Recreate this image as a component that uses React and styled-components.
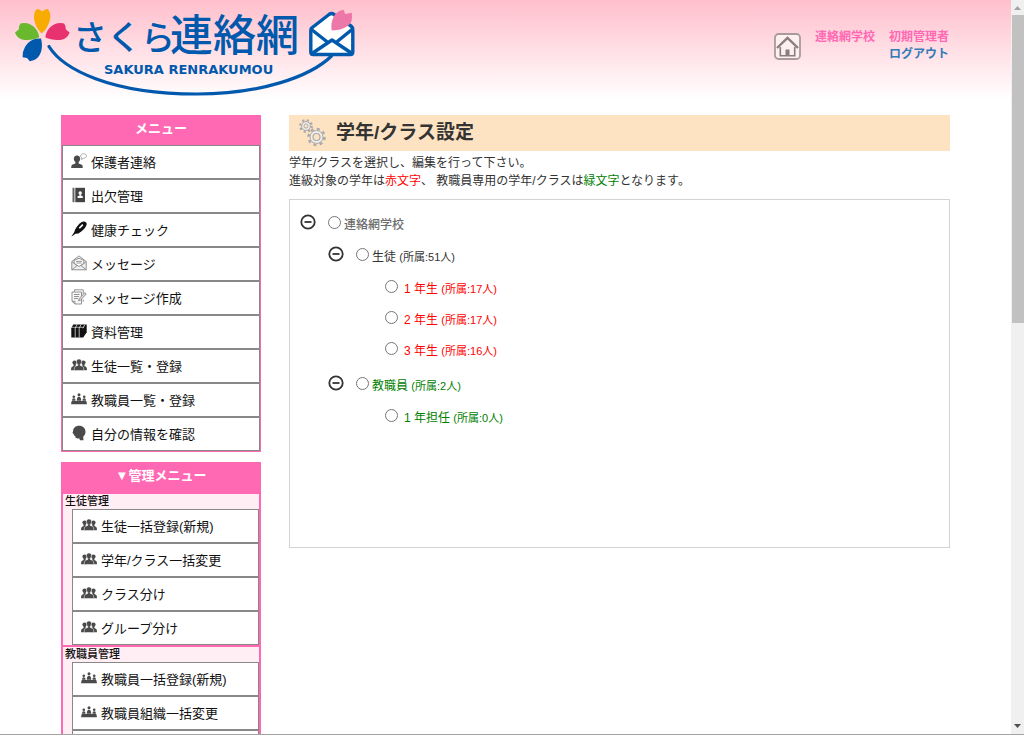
import { useState } from "react";
import styled, { createGlobalStyle } from "styled-components";

const GlobalStyle = createGlobalStyle`
  * {
    box-sizing: border-box;
  }

  body {
    margin: 0;
    background: #fff;
    color: #333;
    font-family: "Liberation Sans", "Noto Sans CJK JP", sans-serif;
    font-size: 12px;
  }

  a {
    color: inherit;
    text-decoration: none;
  }
`;

const Window = styled.div`
  display: grid;
  grid-template-columns: 1fr 13px;
  height: 100vh;
  border-bottom: 1px solid #a3a3a3;
`;

const Page = styled.div`
  overflow-y: auto;
  scrollbar-width: none;
  background: linear-gradient(#ffbfcc, #fff 100px) no-repeat;
`;

const ScrollTrack = styled.div`
  display: flex;
  flex-direction: column;
  align-items: center;
  background: #f0f0f0;
`;

const ScrollArrow = styled.svg`
  width: 13px;
  height: 15px;
  fill: ${(props) => props.$color};
`;

const ScrollThumb = styled.div`
  align-self: stretch;
  flex: 0 0 42%;
  margin: 0 0 auto 1px;
  background: #c1c1c1;
`;

const Header = styled.header`
  display: flex;
  justify-content: space-between;
  height: 115px;
  padding-right: 62px;
`;

const HeaderActions = styled.div`
  display: flex;
  align-items: flex-start;
  gap: 14px;
  padding-top: 29px;
`;

const HomeLink = styled.a`
  padding-top: 4px;

  svg {
    display: block;
  }
`;

const UserInfo = styled.div`
  display: flex;
  flex-direction: column;
  align-items: flex-end;

  line-height: 17px;
  font-weight: 700;
`;

const UserNames = styled.div`
  display: flex;
  gap: 14px;
  color: #ff69b4;
`;

const LogoutLink = styled.a`
  color: #337ab7;
`;

const Columns = styled.div`
  display: flex;
  align-items: flex-start;
  gap: 28px;
  padding: 0 61px;
`;

const Sidebar = styled.nav`
  flex: 0 0 200px;
`;

const Menu = styled.section`
  margin-bottom: 10px;
`;

const MenuTitle = styled.h2`
  margin: 0;
  padding-bottom: 2px;
  background: #ff69b4;
  color: #fff;
  font-size: 13px;
  line-height: 28px;
  font-weight: 700;
  text-align: center;
`;

const MenuList = styled.ul`
  margin: 0;
  padding: 0;
  border: 1px solid #ff69b4;
  border-top: none;
  list-style: none;
`;

const MenuSection = styled.div`
  padding-left: 9px;
  border: 2px solid #ff69b4;
  border-bottom: none;
  background: #ffeef4;

  ${MenuList} {
    border: none;
  }
`;

const SectionTitle = styled.h3`
  margin: 0 0 0 -7px;
  font-size: 11px;
  line-height: 15px;
  font-weight: 500;
  color: #111;
`;

const MenuLink = styled.a`
  display: flex;
  align-items: center;
  gap: 4px;
  height: 34px;
  padding: 0 8px 2px;

  border: 1px solid #888;
  background: #fff;
  color: #111;
  font-size: 13px;

  svg {
    flex: none;
  }
`;

const EmptySlot = styled.li`
  height: 34px;
  border: 1px solid #888;
  background: #fff;
`;

const Main = styled.main`
  flex: 1;
  min-width: 0;
`;

const TitleBar = styled.div`
  display: flex;
  align-items: center;
  gap: 8px;
  height: 36px;
  padding-left: 9px;
  background: #fee3c3;
`;

const Title = styled.h1`
  margin: 0;
  font-size: 19px;
  line-height: 36px;
  font-weight: 700;
`;

const Description = styled.p`
  margin: 3px 0 9px;
  line-height: 18px;
`;

const Mark = styled.span`
  color: ${(props) => props.$color};
`;

const TreePanel = styled.div`
  min-height: 349px;
  padding: 6px 10px;
  border: 1px solid #d3d3d3;
`;

const Branch = styled.ul`
  margin: 0;
  padding: 0 0 0 28px;
  list-style: none;
`;

const Group = styled.li`
  margin-bottom: 3px;
`;

const Leaves = styled.ul`
  margin: 0;
  padding: 1px 0 0 57px;
  list-style: none;
`;

const Row = styled.div`
  display: flex;
  align-items: center;
  height: ${(props) => (props.$leaf ? "31px" : "32px")};

  input {
    width: 13px;
    height: 13px;
    margin: 0;
  }
`;

const ToggleButton = styled.button`
  width: 16px;
  height: 16px;
  margin-right: 12px;
  padding: 0;
  border: none;
  background: transparent;
  cursor: pointer;

  svg {
    display: block;
  }
`;

const NodeLabel = styled.label`
  padding: 2px 0 0 ${(props) => (props.$leaf ? "6px" : "3px")};
  color: ${(props) => props.$color};
  font-weight: ${(props) => (props.$root ? 500 : 400)};
`;

const Count = styled.span`
  font-size: 11px;
`;

const DARK = "#4a4a4a";

const icons = {
  parent: (
    <>
      <path d="M6 2.400c2.200 0 3.300 1.500 3.200 3.600C9 8.200 7.600 9.500 6 9.500S3 8.200 2.800 6C2.700 3.900 3.800 2.400 6 2.400z" fill={DARK} />
      <path d="M4.400 8.500h3.200v2l3.300 1.200q.9.500.9 3.300H.2q0-2.800.9-3.300l3.300-1.200z" fill={DARK} />
      <path
        d="M12.500.8c1.800 0 3 .9 3 2.200s-1.200 2.300-3 2.300l-2 1.200.3-1.700C10 4.400 9.600 3.800 9.600 3c0-1.300 1.200-2.200 2.900-2.200z"
        fill="#fff"
        stroke="#999"
        strokeWidth=".8"
      />
    </>
  ),
  book: (
    <>
      <path d="M1.500.8h2v14.400h-2z" fill="#666" />
      <path d="M4.300.8h9.700v14.400H4.300z" fill="#444" />
      <circle cx="9.200" cy="6" r="1.700" fill="#fff" />
      <path d="M8.600 7h1.200v1.500l2 .8v1.700H6.600V9.300l2-.8z" fill="#fff" />
    </>
  ),
  thermometer: (
    <>
      <path
        d="M.3 15.700l3-4.700C4.600 6.600 8 2.700 10.800 1.100c2.300-1.300 4.900-.3 4.900 2 0 2.700-4.400 7.500-8.300 9.300l-2.900.3z"
        fill="#111"
      />
      <path d="M8.300 7.300l3.500-3.700" stroke="#fff" strokeWidth="1.600" />
    </>
  ),
  mail: (
    <g fill="none" stroke="#888" strokeWidth=".9" strokeLinejoin="round">
      <path d="M.8 6.500L8 .9l7.200 5.600v8.300H.8z" fill="#eee" />
      <path d="M.8 6.500l4.800 4M15.200 6.500l-4.800 4M.8 14.800L8 9l7.200 5.800" />
      <path d="M3.200 8.300V5.200L8 3.300l4.800 1.900v3.100L8 11.500z" fill="#fff" />
      <path d="M5 6.300h6M5.500 8h5" />
    </g>
  ),
  compose: (
    <g fill="none" stroke="#888" strokeWidth=".9">
      <path d="M3.500 2.800V.8h8.700v4M12.200 10.500v2.300" />
      <path d="M1 3h9.500v12H4L1 12.300z" fill="#f6f6f6" />
      <path d="M3 5.500h5.500M3 7.500h5M3 9.500h4M1 12.300h3V15" />
      <path d="M7.500 11.800l.6-2L13.700 3.600l1.600 1.300-5.700 6.200z" fill="#ddd" />
    </g>
  ),
  binders: (
    <>
      <path d="M.3 5.300L2.200 1.500h13.500v7.700L12.200 14.500H.3z" fill="#111" />
      <path d="M4.200 14.500V5.300l1.900-3.800M8.200 14.500V5.300l1.900-3.800M12 5.300l1.900-3.800" stroke="#fff" strokeWidth=".7" fill="none" />
      <path d="M.8 4.300h11.700" stroke="#fff" strokeWidth=".6" />
    </>
  ),
  group: (
    <g fill={DARK}>
      <circle cx="3.600" cy="5.600" r="2.200" />
      <path d="M2.600 7h2v1.800l1.400.8v3.600H0q0-2.800.8-3.200l1.800-.9z" />
      <circle cx="12.400" cy="5.600" r="2.200" />
      <path d="M13.400 7h-2v1.800l-1.400.8v3.600h6q0-2.800-.8-3.200l-1.800-.9z" />
      <path
        d="M8 2c1.700 0 2.500 1.100 2.500 2.600 0 1.300-.5 2.200-1.300 2.800v1l2.700 1.200q.9.400.9 3.900H3.200q0-3.500.9-3.900l2.700-1.200v-1C6 6.800 5.500 5.900 5.500 4.600 5.500 3.100 6.300 2 8 2z"
        stroke="#fff"
        strokeWidth=".5"
      />
    </g>
  ),
  staff: (
    <g fill={DARK}>
      <circle cx="2.800" cy="5.800" r="1.300" />
      <circle cx="8" cy="3.800" r="1.500" />
      <circle cx="13.200" cy="5.800" r="1.300" />
      <path d="M1 9.700q0-2.400 1.800-2.400t1.800 2.400zM5.800 9.700q0-4 2.200-4t2.200 4zM11.400 9.700q0-2.400 1.800-2.400T15 9.700z" />
      <path d="M.7 10h14.600l.7 3.300H0z" />
    </g>
  ),
  face: (
    <path
      d="M8 .8c4 0 6.500 2.600 6.500 6 0 2.600-1.200 4-2.300 4.900l.3 3.500H9l-.8-2c-1.500.5-3.200.3-3.700-.6l-.3-1.500-1.300-.8-.2-1.300L1.500 8l.6-2C2.300 3 4.500.8 8 .8z"
      fill={DARK}
    />
  ),
};

const mainMenu = [
  { icon: "parent", label: "保護者連絡" },
  { icon: "book", label: "出欠管理" },
  { icon: "thermometer", label: "健康チェック" },
  { icon: "mail", label: "メッセージ" },
  { icon: "compose", label: "メッセージ作成" },
  { icon: "binders", label: "資料管理" },
  { icon: "group", label: "生徒一覧・登録" },
  { icon: "staff", label: "教職員一覧・登録" },
  { icon: "face", label: "自分の情報を確認" },
];

const adminMenu = [
  {
    title: "生徒管理",
    items: [
      { icon: "group", label: "生徒一括登録(新規)" },
      { icon: "group", label: "学年/クラス一括変更" },
      { icon: "group", label: "クラス分け" },
      { icon: "group", label: "グループ分け" },
    ],
  },
  {
    title: "教職員管理",
    items: [
      { icon: "staff", label: "教職員一括登録(新規)" },
      { icon: "staff", label: "教職員組織一括変更" },
    ],
    spare: true,
  },
];

const groups = [
  {
    id: "students",
    name: "生徒",
    count: 51,
    color: "#333",
    children: [
      { id: "grade1", name: "1 年生", count: 17, color: "#f00" },
      { id: "grade2", name: "2 年生", count: 17, color: "#f00" },
      { id: "grade3", name: "3 年生", count: 16, color: "#f00" },
    ],
  },
  {
    id: "teachers",
    name: "教職員",
    count: 2,
    color: "#008000",
    children: [{ id: "homeroom1", name: "1 年担任", count: 0, color: "#008000" }],
  },
];

function Logo() {
  return (
    <svg width="370" height="110" viewBox="0 0 370 110">
      <path
        d="M41.700 33.500C36 28 33 20 34.300 14Q35 10 37 9q3.200 0 5.300 2.600Q45 8.600 48 9.200q2.500 2.800 2.300 7.800C49.800 24 46 30 41.700 33.500z"
        fill="#f8ab00"
      />
      <path
        d="M39.300 37.300C38 30 34 25 27 23.300q-4-.8-6.500.2-2 2.500-1.800 6L15 32.500q2 5.500 7 7c6 1.200 12 .5 17.300-2.200z"
        fill="#6ab82d"
      />
      <path
        d="M45.300 37.300C46.600 30 50.600 25 57.600 23.300q4-.8 6.500.2 2 2.500 1.800 6l3.700 3q-2 5.500-7 7c-6 1.200-12 .5-17.300-2.200z"
        fill="#e8316f"
      />
      <path
        d="M41 38.500c-7-.5-13 3-16 8.500q-2.500 4-2.400 10.200l4.400.8 2.800 3.200q6.200-1 9.200-5.200c3.500-5 3.500-12 2-17.500z"
        fill="#0059ad"
      />
      <path
        d="M49 46.500C63 69 110 94 197 94c63 0 113-17 134.500-38"
        fill="none"
        stroke="#0059ad"
        strokeWidth="3.200"
        strokeLinecap="round"
      />
      <g fill="#0059ad" fontFamily="'Noto Sans CJK JP', sans-serif" fontWeight="500">
        <text x="73" y="50" fontSize="34">
          さくら
        </text>
        <text x="170" y="51" fontSize="43">
          連絡網
        </text>
      </g>
      <text x="104" y="74" fill="#0059ad" fontFamily="'DejaVu Sans', sans-serif" fontSize="13" fontWeight="700">
        SAKURA RENRAKUMOU
      </text>
      <g fill="none" stroke="#0059ad" strokeWidth="3.400" strokeLinejoin="round">
        <path
          d="M310.800 30.500q0-2 1.500-3L329 14.500q2.500-1.800 5 0l17 11.500q1.800 1.300 1.800 4v22q0 2.500-2.500 2.500h-37q-2.500 0-2.500-2.500z"
          fill="#fff"
        />
        <path d="M311.500 29.500L328 42.500M352 29.500L336 42.500M312 53.500l20-13.500 20 13.500" />
      </g>
      <path
        d="M331.700 30.500c-.9-5-.2-10 2.300-14.500 2.500-3.500 5.500-5.500 9.500-6.200l1.700 4.200 6.600-1.200q.8 5-.3 8.500c-2.500 5.500-9.500 9-19.800 9.200z"
        fill="#ee77aa"
      />
    </svg>
  );
}

function HomeIcon() {
  return (
    <svg width="27" height="27" viewBox="0 0 27 27" fill="none">
      <rect x="1" y="1" width="25" height="25" rx="3.500" fill="#fdf0f1" stroke="#a99a9c" strokeWidth="1.800" />
      <path d="M6.300 14v8.700h14.400V14" stroke="#8b7d7f" strokeWidth="1.600" />
      <path d="M3 15L13.500 4.800 24 15" stroke="#8b7d7f" strokeWidth="2.400" />
      <path d="M11.500 16.500h4V23h-4z" fill="#8b7d7f" />
    </svg>
  );
}

function GearsIcon() {
  return (
    <svg width="30" height="30" viewBox="0 0 30 30" fill="none">
      <g stroke="#aaa">
        <circle cx="8" cy="8" r="5.700" strokeWidth="2.400" strokeDasharray="2.200 2.276" />
        <circle cx="8" cy="8" r="4.400" fill="#f0eeec" strokeWidth="1" />
        <circle cx="8" cy="8" r="2.100" fill="#fee3c3" strokeWidth="1" />
        <circle cx="18.500" cy="19" r="8" strokeWidth="2.600" strokeDasharray="3 3.283" />
        <circle cx="18.500" cy="19" r="6.500" fill="#f0eeec" strokeWidth="1" />
        <circle cx="18.500" cy="19" r="3.500" fill="#fee3c3" strokeWidth="1.200" />
      </g>
    </svg>
  );
}

function MenuItem({ icon, label }) {
  return (
    <li>
      <MenuLink href="#">
        <svg width="16" height="16" viewBox="0 0 16 16" fill="none">
          {icons[icon]}
        </svg>
        {label}
      </MenuLink>
    </li>
  );
}

function Toggle({ open, label, onClick }) {
  return (
    <ToggleButton type="button" aria-label={label} aria-expanded={open} onClick={onClick}>
      <svg width="16" height="16" viewBox="0 0 16 16" fill="none" stroke="#333" strokeWidth="1.800">
        <circle cx="8" cy="8" r="6.700" />
        <path d="M4.500 8h7" />
        {!open && <path d="M8 4.500v7" />}
      </svg>
    </ToggleButton>
  );
}

function TreeNode({ node, leaf }) {
  return (
    <>
      <input type="radio" name="group" id={node.id} />
      <NodeLabel htmlFor={node.id} $color={node.color} $leaf={leaf}>
        {node.name} <Count>(所属:{node.count}人)</Count>
      </NodeLabel>
    </>
  );
}

function GroupTree() {
  const [closed, setClosed] = useState({});

  const toggle = (id) => setClosed({ ...closed, [id]: !closed[id] });

  return (
    <TreePanel>
      <Row>
        <Toggle open={!closed.school} label="連絡網学校" onClick={() => toggle("school")} />
        <input type="radio" name="group" id="school" />
        <NodeLabel htmlFor="school" $color="#6c6c6c" $root>
          連絡網学校
        </NodeLabel>
      </Row>
      {!closed.school && (
        <Branch>
          {groups.map((group) => (
            <Group key={group.id}>
              <Row>
                <Toggle open={!closed[group.id]} label={group.name} onClick={() => toggle(group.id)} />
                <TreeNode node={group} />
              </Row>
              {!closed[group.id] && (
                <Leaves>
                  {group.children.map((child) => (
                    <li key={child.id}>
                      <Row $leaf>
                        <TreeNode node={child} leaf />
                      </Row>
                    </li>
                  ))}
                </Leaves>
              )}
            </Group>
          ))}
        </Branch>
      )}
    </TreePanel>
  );
}

function App() {
  return (
    <Window>
      <GlobalStyle />
      <Page>
        <Header>
          <Logo />
          <HeaderActions>
            <HomeLink href="#" aria-label="ホーム">
              <HomeIcon />
            </HomeLink>
            <UserInfo>
              <UserNames>
                <span>連絡網学校</span>
                <span>初期管理者</span>
              </UserNames>
              <LogoutLink href="#">ログアウト</LogoutLink>
            </UserInfo>
          </HeaderActions>
        </Header>

        <Columns>
          <Sidebar>
            <Menu>
              <MenuTitle>メニュー</MenuTitle>
              <MenuList>
                {mainMenu.map((item) => (
                  <MenuItem key={item.label} {...item} />
                ))}
              </MenuList>
            </Menu>
            <Menu>
              <MenuTitle>▼管理メニュー</MenuTitle>
              {adminMenu.map((section) => (
                <MenuSection key={section.title}>
                  <SectionTitle>{section.title}</SectionTitle>
                  <MenuList>
                    {section.items.map((item) => (
                      <MenuItem key={item.label} {...item} />
                    ))}
                    {section.spare && <EmptySlot />}
                  </MenuList>
                </MenuSection>
              ))}
            </Menu>
          </Sidebar>

          <Main>
            <TitleBar>
              <GearsIcon />
              <Title>学年/クラス設定</Title>
            </TitleBar>
            <Description>
              学年/クラスを選択し、編集を行って下さい。
              <br />
              進級対象の学年は<Mark $color="#f00">赤文字</Mark>、 教職員専用の学年/クラスは
              <Mark $color="#008000">緑文字</Mark>となります。
            </Description>
            <GroupTree />
          </Main>
        </Columns>
      </Page>

      <ScrollTrack>
        <ScrollArrow viewBox="0 0 13 15" $color="#a3a3a3">
          <path d="M3 10l3.500-4 3.500 4z" />
        </ScrollArrow>
        <ScrollThumb />
        <ScrollArrow viewBox="0 0 13 15" $color="#505050">
          <path d="M3 5l3.500 4L10 5z" />
        </ScrollArrow>
      </ScrollTrack>
    </Window>
  );
}

export default App;
